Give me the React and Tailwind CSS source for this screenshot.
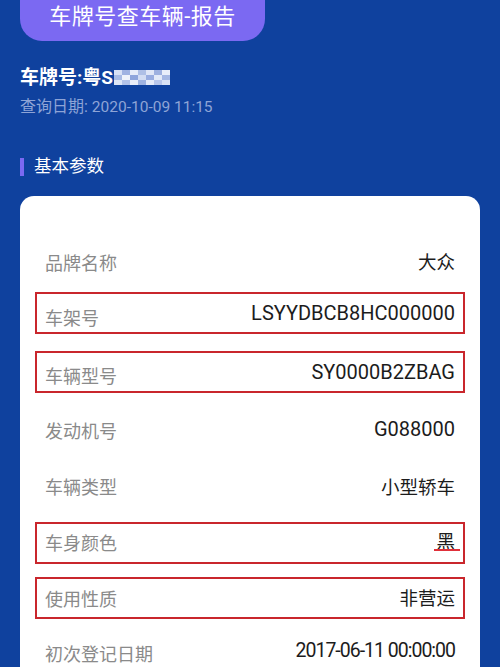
const font = { fontFamily: 'Roboto, "Noto Sans CJK SC", sans-serif' }

const rows = [
  { label: '品牌名称', value: '大众', mt: 'mt-0', lab: 'pt-[2px]', val: 'pt-[2px] text-[18.5px]' },
  { label: '车架号', value: 'LSYYDBCB8HC000000', boxed: true, mt: 'mt-[8px]', lab: 'pt-[13px]', val: 'pt-0 text-[20px]' },
  { label: '车辆型号', value: 'SY0000B2ZBAG', boxed: true, mt: 'mt-[17px]', lab: 'pt-[11px]', val: 'pt-0 text-[20px]' },
  { label: '发动机号', value: 'G088000', mt: 'mt-[15px]', lab: 'pt-[7px]', val: 'pt-0 text-[20px]' },
  { label: '车辆类型', value: '小型轿车', mt: 'mt-[16px]', lab: 'pt-[3px]', val: 'pt-[3px] text-[18.5px]' },
  { label: '车身颜色', value: '黑', boxed: true, squiggle: true, mt: 'mt-[14px]', lab: 'pt-[3px]', val: 'pt-0 text-[18.5px]' },
  { label: '使用性质', value: '非营运', boxed: true, mt: 'mt-[13px]', lab: 'pt-[4px]', val: 'pt-[4px] text-[18.5px]' },
  { label: '初次登记日期', value: '2017-06-11 00:00:00', mt: 'mt-[11px]', lab: 'pt-[8px]', val: 'pt-0 text-[19.5px] tracking-[-1px]' },
]

const mosaic = [
  ['#d7e0f5', '#9fb2e2', '#e6ecf9', '#aebfe6', '#dfe6f7', '#9db0e0', '#e9eefa'],
  ['#a9bbe5', '#eef2fb', '#8ea5dc', '#d2dcf3', '#98ace0', '#e2e9f8', '#a6b8e4'],
  ['#dde5f6', '#b3c2e8', '#e8edf9', '#9fb3e1', '#e4eaf8', '#b8c6ea', '#d9e2f5'],
]

function Row({ r }) {
  return (
    <div
      className={`${r.mt} mx-[15px] h-[42px] flex items-center justify-between px-[8px] border-2 ${
        r.boxed ? 'border-[#c9262c]' : 'border-transparent'
      }`}
    >
      <span className={`${r.lab} text-[18px] text-[#8a8a8a] leading-none`}>{r.label}</span>
      <span className={`${r.val} relative text-[#1c1c1c] leading-none`}>
        {r.value}
        {r.squiggle && (
          <span className="absolute left-[-2px] right-[-5px] bottom-[1px] h-[2px] bg-[#e0303a]" />
        )}
      </span>
    </div>
  )
}

export default function App() {
  return (
    <div className="w-[500px] h-[667px] overflow-hidden bg-[#0f419e] px-[20px]" style={font}>
      <div className="-mt-[21px] w-[245px] h-[62px] pt-[21px] pb-[7px] rounded-[22px] bg-[#7b69f2] flex items-center justify-center">
        <span className="text-[22px] text-white leading-none tracking-[0.5px]">车牌号查车辆-报告</span>
      </div>

      <div className="mt-[26px] flex items-center h-[20px]">
        <span className="text-[19px] font-bold text-white leading-none">车牌号:粤S</span>
        <div className="ml-[1px] flex flex-col">
          {mosaic.map((line, i) => (
            <div key={i} className="flex">
              {line.map((c, j) => (
                <span key={j} className="block w-[8px] h-[5px]" style={{ backgroundColor: c }} />
              ))}
            </div>
          ))}
        </div>
      </div>

      <div className="mt-[12px] text-[16px] text-[#8ea4d6] leading-none">
        查询日期: <span className="text-[15.5px]">2020-10-09 11:15</span>
      </div>

      <div className="mt-[42px] flex items-center h-[18px]">
        <span className="block w-[4px] h-[18px] bg-[#7b69f2]" />
        <span className="ml-[10px] text-[17.5px] text-white leading-none">基本参数</span>
      </div>

      <div className="mt-[20px] bg-white rounded-t-[14px] pt-[46px] pb-[20px]">
        {rows.map((r) => (
          <Row key={r.label} r={r} />
        ))}
      </div>
    </div>
  )
}
